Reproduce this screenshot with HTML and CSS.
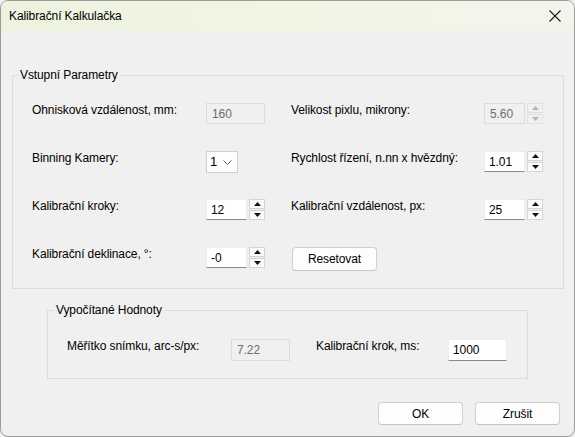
FILE: index.html
```html
<!DOCTYPE html>
<html lang="cs">
<head>
<meta charset="utf-8">
<title>Kalibrační Kalkulačka</title>
<link rel="stylesheet" href="styles.css">
</head>
<body>
<div class="window">
  <div class="titlebar">
    <span class="title">Kalibrační Kalkulačka</span>
    <span class="close"><svg width="12" height="12" viewBox="0 0 12 12"><path d="M0.5 0.5 L11.5 11.5 M11.5 0.5 L0.5 11.5" stroke="#1a1a1a" stroke-width="1.1" fill="none"/></svg></span>
  </div>
  <div class="body">
    <fieldset class="group group-in">
      <legend>Vstupní Parametry</legend>
      <div class="grid">
        <div class="field">
          <span class="lbl lbl-l">Ohnisková vzdálenost, mm:</span>
          <div class="box disabled wide">160</div>
        </div>
        <div class="field">
          <span class="lbl lbl-r">Velikost pixlu, mikrony:</span>
          <div class="box disabled">5.60</div>
          <div class="spin spin-off">
            <span class="sb"><svg width="7" height="4" viewBox="0 0 7 4"><polygon points="0,4 7,4 3.5,0"/></svg></span>
            <span class="sb"><svg width="7" height="4" viewBox="0 0 7 4"><polygon points="0,0 7,0 3.5,4"/></svg></span>
          </div>
        </div>
        <div class="field">
          <span class="lbl lbl-l">Binning Kamery:</span>
          <div class="combo"><span>1</span><svg width="9" height="5" viewBox="0 0 9 5"><polyline points="0.5,0.5 4.5,4.5 8.5,0.5" fill="none" stroke="#606060" stroke-width="1"/></svg></div>
        </div>
        <div class="field">
          <span class="lbl lbl-r">Rychlost řízení, n.nn x hvězdný:</span>
          <div class="box">1.01</div>
          <div class="spin">
            <span class="sb"><svg width="7" height="4" viewBox="0 0 7 4"><polygon points="0,4 7,4 3.5,0"/></svg></span>
            <span class="sb"><svg width="7" height="4" viewBox="0 0 7 4"><polygon points="0,0 7,0 3.5,4"/></svg></span>
          </div>
        </div>
        <div class="field">
          <span class="lbl lbl-l">Kalibrační kroky:</span>
          <div class="box">12</div>
          <div class="spin">
            <span class="sb"><svg width="7" height="4" viewBox="0 0 7 4"><polygon points="0,4 7,4 3.5,0"/></svg></span>
            <span class="sb"><svg width="7" height="4" viewBox="0 0 7 4"><polygon points="0,0 7,0 3.5,4"/></svg></span>
          </div>
        </div>
        <div class="field">
          <span class="lbl lbl-r">Kalibrační vzdálenost, px:</span>
          <div class="box">25</div>
          <div class="spin">
            <span class="sb"><svg width="7" height="4" viewBox="0 0 7 4"><polygon points="0,4 7,4 3.5,0"/></svg></span>
            <span class="sb"><svg width="7" height="4" viewBox="0 0 7 4"><polygon points="0,0 7,0 3.5,4"/></svg></span>
          </div>
        </div>
        <div class="field">
          <span class="lbl lbl-l">Kalibrační deklinace, °:</span>
          <div class="box">-0</div>
          <div class="spin">
            <span class="sb"><svg width="7" height="4" viewBox="0 0 7 4"><polygon points="0,4 7,4 3.5,0"/></svg></span>
            <span class="sb"><svg width="7" height="4" viewBox="0 0 7 4"><polygon points="0,0 7,0 3.5,4"/></svg></span>
          </div>
        </div>
        <div class="field">
          <button class="btn btn-reset">Resetovat</button>
        </div>
      </div>
    </fieldset>

    <fieldset class="group group-out">
      <legend>Vypočítané Hodnoty</legend>
      <div class="outrow">
        <span class="lbl lbl-o1">Měřítko snímku, arc-s/px:</span>
        <div class="box disabled wide">7.22</div>
        <span class="lbl lbl-o2">Kalibrační krok, ms:</span>
        <div class="box wide">1000</div>
      </div>
    </fieldset>

    <div class="actions">
      <button class="btn">OK</button>
      <button class="btn">Zrušit</button>
    </div>
  </div>
</div>
</body>
</html>
```

FILE: styles.css
```css
* { box-sizing: border-box; }

html, body {
  margin: 0;
  padding: 0;
  background: #f0f0f0;
}

body {
  font-family: "Liberation Sans", Arial, sans-serif;
  font-size: 12px;
  letter-spacing: -0.1px;
  color: #000;
}

.window {
  width: 575px;
  height: 437px;
  border: 1px solid #9c9c9c;
  border-radius: 8px;
  overflow: hidden;
  background: #f0f0f0;
}

.titlebar {
  height: 30px;
  display: flex;
  align-items: center;
  justify-content: space-between;
  padding: 0 13px 0 8px;
  background: linear-gradient(90deg, #eef3e0 0%, #f1f6e4 50%, #f3f5ec 100%);
}

.title {
  font-size: 12px;
  line-height: 14px;
  color: #000;
}

.close {
  display: flex;
  width: 12px;
  height: 12px;
}

.body {
  padding-top: 37px;
}

.group {
  margin: 0;
  border: 1px solid #dcdcdc;
  min-width: 0;
}

.group legend {
  padding: 0 2px;
  font-size: 12px;
  line-height: 14px;
}

.group-in {
  margin: 0 10px 0 11px;
  padding: 21px 0 19px 0;
}

.group-in legend {
  margin-left: 5px;
}

.grid {
  display: grid;
  grid-template-columns: 233px 1fr;
  column-gap: 26px;
  row-gap: 26px;
  padding-left: 19px;
}

.field {
  display: flex;
  align-items: flex-start;
  height: 22px;
}

.lbl {
  line-height: 14px;
  white-space: nowrap;
}

.lbl-l { width: 174px; }
.lbl-r { width: 193px; }

.box {
  width: 41px;
  height: 21px;
  padding-left: 4px;
  line-height: 20px;
  background: #fff;
  border: 1px solid #ececec;
  border-bottom-color: #8a8a8a;
  white-space: nowrap;
}

.box.wide { width: 59px; }

.box.disabled {
  background: #f0f0f0;
  border-color: #dcdcdc;
  color: #6d6d6d;
  padding-left: 5px;
}

.spin {
  margin-left: 2px;
  width: 16px;
  height: 21px;
  display: flex;
  flex-direction: column;
  gap: 1px;
}

.sb {
  flex: 1;
  display: flex;
  align-items: center;
  justify-content: center;
  background: #fbfbfb;
  border: 1px solid #d4d4d4;
}

.sb svg polygon { fill: #111; }

.spin-off .sb {
  background: #f0f0f0;
  border-color: #e0e0e0;
}

.spin-off .sb svg polygon { fill: #b4b4b4; }

.combo {
  width: 32px;
  height: 22px;
  display: flex;
  align-items: center;
  justify-content: space-between;
  padding: 0 5px 0 3px;
  background: #fdfdfd;
  border: 1px solid #cfcfcf;
}

.combo span {
  font-size: 13px;
  line-height: 14px;
}

.btn {
  font-family: "Liberation Sans", Arial, sans-serif;
  font-size: 12px;
  letter-spacing: -0.1px;
  color: #000;
  width: 85px;
  height: 23px;
  padding: 0;
  background: #fdfdfd;
  border: 1px solid #d0d0d0;
  border-bottom-color: #c4c4c4;
  border-radius: 4px;
}

.btn-reset {
  margin-left: 1px;
  height: 24px;
}

.group-out {
  margin: 14px 0 0 46px;
  width: 481px;
  padding: 22px 0 17px 0;
}

.group-out legend {
  margin-left: 6px;
}

.outrow {
  display: flex;
  align-items: flex-start;
  padding-left: 19px;
}

.outrow .box { height: 22px; line-height: 21px; }

.lbl-o1 { width: 164px; }
.lbl-o2 { width: 132px; margin-left: 26px; }

.actions {
  display: flex;
  justify-content: flex-end;
  gap: 12px;
  padding-right: 14px;
  margin-top: 23px;
}
```
